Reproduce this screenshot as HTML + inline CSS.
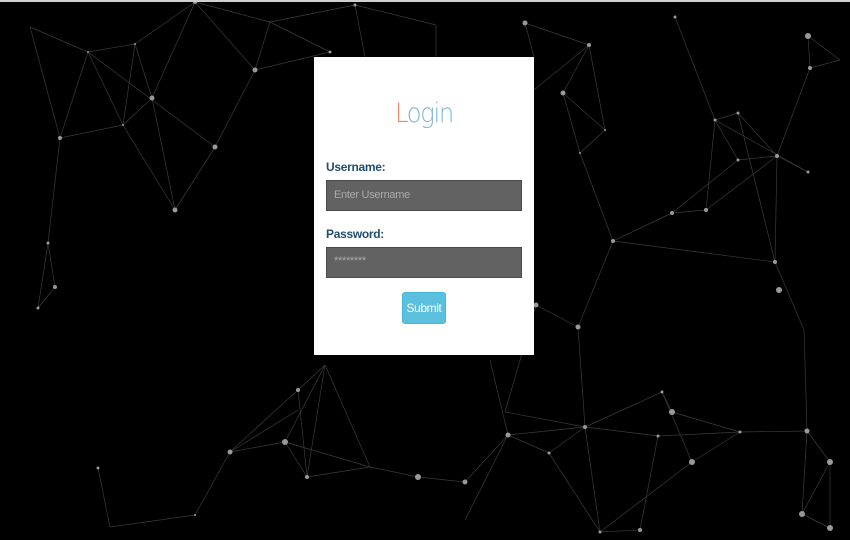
<!DOCTYPE html>
<html><head><style>
html,body{margin:0;padding:0;width:850px;height:540px;overflow:hidden;background:#000;}
.top{position:absolute;left:0;top:0;width:850px;height:2px;background:#d0d0d0;}
svg{position:absolute;left:0;top:0;}
.card{position:absolute;left:314px;top:57px;width:220px;height:298px;background:#fff;font-family:"Liberation Sans",sans-serif;}
h1{position:absolute;top:41px;left:0;width:220px;text-align:center;margin:0;font-size:27px;color:#7fb6d2;font-family:"DejaVu Sans","Liberation Sans",sans-serif;letter-spacing:-1.5px;font-weight:200;transform:scaleX(0.9);}
h1 span{color:#f2836b;}
.lbl{position:absolute;left:12px;font-size:12px;font-weight:bold;color:#1f4e6e;letter-spacing:-0.3px;}
.inp{position:absolute;left:12px;width:196px;height:31px;background:#636262;border:1px solid #4a4a4a;color:#aaa;font-size:11px;line-height:29px;padding-left:7px;box-sizing:border-box;letter-spacing:-0.3px;}
.btn{position:absolute;left:88px;top:235px;width:44px;height:32px;box-sizing:border-box;background:#5bc0de;border:1px solid #46b8da;border-radius:3px;color:#fff;font-size:12px;text-align:center;line-height:30px;letter-spacing:-0.4px;}
</style></head><body>
<svg width="850" height="540" stroke="#3a3a3a" stroke-width="0.7" fill="#999">
<g>
<line x1="30" y1="27" x2="88" y2="52"/><line x1="30" y1="27" x2="60" y2="138"/>
<line x1="88" y1="52" x2="135" y2="44"/><line x1="88" y1="52" x2="60" y2="138"/>
<line x1="88" y1="52" x2="123" y2="125"/><line x1="88" y1="52" x2="215" y2="147"/>
<line x1="135" y1="44" x2="195" y2="2"/><line x1="135" y1="44" x2="123" y2="125"/><line x1="135" y1="44" x2="152" y2="98"/>
<line x1="195" y1="2" x2="152" y2="98"/><line x1="195" y1="2" x2="255" y2="70"/><line x1="195" y1="2" x2="270" y2="22"/>
<line x1="60" y1="138" x2="123" y2="125"/><line x1="123" y1="125" x2="152" y2="98"/><line x1="123" y1="125" x2="175" y2="210"/>
<line x1="152" y1="98" x2="175" y2="210"/><line x1="215" y1="147" x2="175" y2="210"/><line x1="215" y1="147" x2="255" y2="70"/>
<line x1="270" y1="22" x2="255" y2="70"/><line x1="255" y1="70" x2="330" y2="52"/><line x1="270" y1="22" x2="355" y2="5"/><line x1="270" y1="22" x2="330" y2="52"/>
<line x1="355" y1="5" x2="436" y2="25"/><line x1="355" y1="5" x2="365" y2="57"/><line x1="436" y1="25" x2="436" y2="57"/>
<line x1="525" y1="23" x2="589" y2="45"/><line x1="525" y1="23" x2="534" y2="57"/><line x1="589" y1="45" x2="563" y2="93"/>
<line x1="589" y1="45" x2="605" y2="130"/><line x1="563" y1="93" x2="580" y2="153"/><line x1="563" y1="93" x2="605" y2="130"/><line x1="580" y1="153" x2="605" y2="130"/>
<line x1="580" y1="153" x2="613" y2="241"/><line x1="589" y1="45" x2="534" y2="90"/><line x1="675" y1="17" x2="715" y2="120"/>
<line x1="613" y1="241" x2="672" y2="213"/><line x1="672" y1="213" x2="706" y2="210"/><line x1="706" y1="210" x2="715" y2="120"/><line x1="706" y1="210" x2="777" y2="156"/>
<line x1="715" y1="120" x2="738" y2="113"/><line x1="715" y1="120" x2="738" y2="160"/><line x1="715" y1="120" x2="808" y2="172"/><line x1="738" y1="113" x2="777" y2="156"/>
<line x1="738" y1="160" x2="777" y2="156"/><line x1="777" y1="156" x2="808" y2="172"/><line x1="777" y1="156" x2="810" y2="68"/><line x1="810" y1="68" x2="808" y2="36"/>
<line x1="808" y1="36" x2="840" y2="60"/><line x1="810" y1="68" x2="840" y2="60"/><line x1="777" y1="156" x2="775" y2="262"/><line x1="738" y1="113" x2="775" y2="262"/>
<line x1="775" y1="262" x2="804" y2="330"/><line x1="613" y1="241" x2="775" y2="262"/><line x1="672" y1="213" x2="738" y2="160"/><line x1="613" y1="241" x2="578" y2="327"/>
<line x1="578" y1="327" x2="536" y2="305"/><line x1="578" y1="327" x2="585" y2="427"/><line x1="804" y1="330" x2="807" y2="431"/>
<line x1="60" y1="138" x2="48" y2="243"/><line x1="48" y1="243" x2="55" y2="287"/><line x1="55" y1="287" x2="38" y2="308"/><line x1="48" y1="243" x2="38" y2="308"/>
<line x1="325" y1="365" x2="298" y2="390"/><line x1="325" y1="365" x2="285" y2="442"/><line x1="325" y1="365" x2="307" y2="477"/><line x1="325" y1="365" x2="370" y2="467"/>
<line x1="298" y1="390" x2="230" y2="452"/><line x1="298" y1="390" x2="307" y2="477"/><line x1="285" y1="442" x2="307" y2="477"/><line x1="230" y1="452" x2="285" y2="442"/>
<line x1="285" y1="442" x2="370" y2="467"/><line x1="307" y1="477" x2="370" y2="467"/><line x1="370" y1="467" x2="418" y2="477"/><line x1="418" y1="477" x2="465" y2="482"/>
<line x1="465" y1="482" x2="508" y2="435"/><line x1="508" y1="435" x2="549" y2="453"/><line x1="508" y1="435" x2="585" y2="427"/><line x1="549" y1="453" x2="585" y2="427"/>
<line x1="490" y1="360" x2="508" y2="435"/><line x1="505" y1="412" x2="585" y2="427"/><line x1="585" y1="427" x2="662" y2="392"/><line x1="585" y1="427" x2="658" y2="436"/>
<line x1="662" y1="392" x2="672" y2="412"/><line x1="662" y1="392" x2="692" y2="462"/><line x1="672" y1="412" x2="740" y2="432"/><line x1="658" y1="436" x2="740" y2="432"/>
<line x1="740" y1="432" x2="807" y2="431"/><line x1="692" y1="462" x2="740" y2="432"/><line x1="807" y1="431" x2="830" y2="462"/><line x1="807" y1="431" x2="802" y2="514"/>
<line x1="830" y1="462" x2="802" y2="514"/><line x1="830" y1="462" x2="830" y2="528"/><line x1="802" y1="514" x2="830" y2="528"/><line x1="585" y1="427" x2="600" y2="532"/>
<line x1="600" y1="532" x2="640" y2="530"/><line x1="640" y1="530" x2="658" y2="436"/><line x1="549" y1="453" x2="600" y2="532"/><line x1="600" y1="532" x2="692" y2="462"/>
<line x1="508" y1="435" x2="465" y2="520"/><line x1="98" y1="468" x2="110" y2="527"/><line x1="110" y1="527" x2="195" y2="515"/><line x1="195" y1="515" x2="230" y2="452"/>
<line x1="230" y1="452" x2="298" y2="410"/><line x1="536" y1="305" x2="505" y2="412"/>
</g>
<g stroke="none">
<circle cx="195" cy="2" r="2"/><circle cx="135" cy="44" r="1"/><circle cx="88" cy="52" r="1"/><circle cx="60" cy="138" r="2"/>
<circle cx="123" cy="125" r="1"/><circle cx="152" cy="98" r="2.5"/><circle cx="215" cy="147" r="2.5"/><circle cx="175" cy="210" r="2.5"/>
<circle cx="255" cy="70" r="2.5"/><circle cx="330" cy="52" r="1.5"/><circle cx="355" cy="5" r="1.5"/><circle cx="525" cy="23" r="2.5"/>
<circle cx="589" cy="45" r="2"/><circle cx="675" cy="17" r="1.5"/><circle cx="563" cy="93" r="2.5"/><circle cx="605" cy="130" r="1"/>
<circle cx="580" cy="153" r="1"/><circle cx="613" cy="241" r="2"/><circle cx="672" cy="213" r="2"/><circle cx="706" cy="210" r="2"/>
<circle cx="715" cy="120" r="1.5"/><circle cx="738" cy="113" r="1.5"/><circle cx="738" cy="160" r="1.5"/><circle cx="777" cy="156" r="2"/>
<circle cx="808" cy="172" r="1.5"/><circle cx="810" cy="68" r="2"/><circle cx="808" cy="36" r="3"/><circle cx="775" cy="262" r="2"/>
<circle cx="779" cy="290" r="3"/><circle cx="48" cy="243" r="1.5"/><circle cx="55" cy="287" r="2"/><circle cx="38" cy="308" r="1.5"/>
<circle cx="578" cy="327" r="2.5"/><circle cx="536" cy="305" r="2.5"/><circle cx="298" cy="390" r="2"/><circle cx="285" cy="442" r="3"/>
<circle cx="230" cy="452" r="2.5"/><circle cx="307" cy="477" r="2"/><circle cx="418" cy="477" r="3"/><circle cx="465" cy="482" r="2.5"/>
<circle cx="508" cy="435" r="2.5"/><circle cx="549" cy="453" r="1.5"/><circle cx="585" cy="427" r="2"/><circle cx="662" cy="392" r="1.5"/>
<circle cx="672" cy="412" r="3"/><circle cx="658" cy="436" r="1.5"/><circle cx="692" cy="462" r="3"/><circle cx="740" cy="432" r="1.5"/>
<circle cx="807" cy="431" r="2.5"/><circle cx="830" cy="462" r="3"/><circle cx="802" cy="514" r="3"/><circle cx="830" cy="528" r="3"/>
<circle cx="640" cy="530" r="2"/><circle cx="600" cy="532" r="1.5"/><circle cx="98" cy="468" r="1.5"/><circle cx="195" cy="515" r="1"/>
</g>
</svg>
<div class="top"></div>
<div class="card">
<h1><span>L</span>ogin</h1>
<div class="lbl" style="top:103px">Username:</div>
<div class="inp" style="top:123px">Enter Username</div>
<div class="lbl" style="top:170px">Password:</div>
<div class="inp" style="top:190px;line-height:27px">********</div>
<div class="btn">Submit</div>
</div>
</body></html>
